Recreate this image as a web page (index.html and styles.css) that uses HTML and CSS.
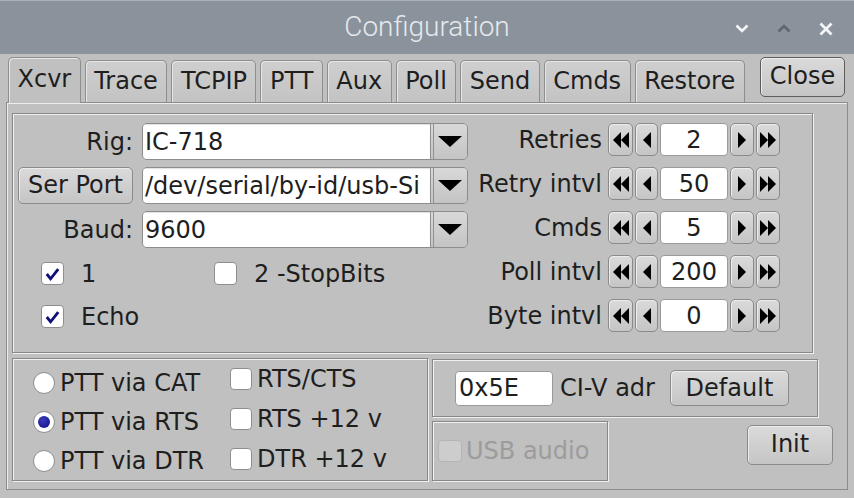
FILE: index.html
```html
<!DOCTYPE html>
<html>
<head>
<meta charset="utf-8">
<link rel="stylesheet" href="styles.css">
</head>
<body>
<div class="titlebar">
  <div></div>
  <div class="title">Configuration</div>
  <div class="wm">
    <svg class="wm-ico" width="14" height="9" viewBox="0 0 14 9"><polyline points="1.5,1.5 7,7 12.5,1.5" fill="none" stroke="#f4f5f6" stroke-width="2.6"/></svg>
    <svg class="wm-ico" width="14" height="9" viewBox="0 0 14 9"><polyline points="1.5,7.5 7,2 12.5,7.5" fill="none" stroke="#5e666e" stroke-width="2.6"/></svg>
    <svg class="wm-ico" width="14" height="14" viewBox="0 0 14 14"><path d="M1.5 1.5 L12.5 12.5 M12.5 1.5 L1.5 12.5" fill="none" stroke="#f4f5f6" stroke-width="2.8"/></svg>
  </div>
</div>

<div class="tabs">
  <div class="tab sel">Xcvr</div>
  <div class="tab">Trace</div>
  <div class="tab">TCPIP</div>
  <div class="tab">PTT</div>
  <div class="tab">Aux</div>
  <div class="tab">Poll</div>
  <div class="tab">Send</div>
  <div class="tab">Cmds</div>
  <div class="tab">Restore</div>
  <div class="btn close">Close</div>
</div>

<div class="panel">
  <div class="group upper">
    <div class="left">
      <div class="form">
        <div class="lbl">Rig:</div>
        <div class="choice"><div class="choice-val">IC-718</div><div class="choice-btn"><svg width="24" height="11" viewBox="0 0 24 11"><polygon points="0,0 24,0 12,11" fill="#000"/></svg></div></div>
        <div class="btn serport">Ser Port</div>
        <div class="choice"><div class="choice-val">/dev/serial/by-id/usb-Si</div><div class="choice-btn"><svg width="24" height="11" viewBox="0 0 24 11"><polygon points="0,0 24,0 12,11" fill="#000"/></svg></div></div>
        <div class="lbl">Baud:</div>
        <div class="choice"><div class="choice-val">9600</div><div class="choice-btn"><svg width="24" height="11" viewBox="0 0 24 11"><polygon points="0,0 24,0 12,11" fill="#000"/></svg></div></div>
      </div>
      <div class="checks">
        <div class="check-row">
          <div class="check-item first"><span class="cbox"><svg width="22" height="22" viewBox="0 0 22 22"><polyline points="5,11 9,16 17,6" fill="none" stroke="#10107a" stroke-width="3"/></svg></span><span>1</span></div>
          <div class="check-item"><span class="cbox"></span><span>2 -StopBits</span></div>
        </div>
        <div class="check-row">
          <div class="check-item first"><span class="cbox"><svg width="22" height="22" viewBox="0 0 22 22"><polyline points="5,11 9,16 17,6" fill="none" stroke="#10107a" stroke-width="3"/></svg></span><span>Echo</span></div>
        </div>
      </div>
    </div>
    <div class="counters">
      <div class="clbl">Retries</div>
      <div class="counter">
        <div class="btn cb w25"><svg width="16" height="16" viewBox="0 0 16 16"><polygon points="8,0 0,8 8,16" /><polygon points="16,0 8,8 16,16"/></svg></div>
        <div class="btn cb w23"><svg width="8" height="16" viewBox="0 0 8 16"><polygon points="8,0 0,8 8,16"/></svg></div>
        <div class="cval">2</div>
        <div class="btn cb w24"><svg width="8" height="16" viewBox="0 0 8 16"><polygon points="0,0 8,8 0,16"/></svg></div>
        <div class="btn cb w24"><svg width="16" height="16" viewBox="0 0 16 16"><polygon points="0,0 8,8 0,16"/><polygon points="8,0 16,8 8,16"/></svg></div>
      </div>
      <div class="clbl">Retry intvl</div>
      <div class="counter">
        <div class="btn cb w25"><svg width="16" height="16" viewBox="0 0 16 16"><polygon points="8,0 0,8 8,16" /><polygon points="16,0 8,8 16,16"/></svg></div>
        <div class="btn cb w23"><svg width="8" height="16" viewBox="0 0 8 16"><polygon points="8,0 0,8 8,16"/></svg></div>
        <div class="cval">50</div>
        <div class="btn cb w24"><svg width="8" height="16" viewBox="0 0 8 16"><polygon points="0,0 8,8 0,16"/></svg></div>
        <div class="btn cb w24"><svg width="16" height="16" viewBox="0 0 16 16"><polygon points="0,0 8,8 0,16"/><polygon points="8,0 16,8 8,16"/></svg></div>
      </div>
      <div class="clbl">Cmds</div>
      <div class="counter">
        <div class="btn cb w25"><svg width="16" height="16" viewBox="0 0 16 16"><polygon points="8,0 0,8 8,16" /><polygon points="16,0 8,8 16,16"/></svg></div>
        <div class="btn cb w23"><svg width="8" height="16" viewBox="0 0 8 16"><polygon points="8,0 0,8 8,16"/></svg></div>
        <div class="cval">5</div>
        <div class="btn cb w24"><svg width="8" height="16" viewBox="0 0 8 16"><polygon points="0,0 8,8 0,16"/></svg></div>
        <div class="btn cb w24"><svg width="16" height="16" viewBox="0 0 16 16"><polygon points="0,0 8,8 0,16"/><polygon points="8,0 16,8 8,16"/></svg></div>
      </div>
      <div class="clbl">Poll intvl</div>
      <div class="counter">
        <div class="btn cb w25"><svg width="16" height="16" viewBox="0 0 16 16"><polygon points="8,0 0,8 8,16" /><polygon points="16,0 8,8 16,16"/></svg></div>
        <div class="btn cb w23"><svg width="8" height="16" viewBox="0 0 8 16"><polygon points="8,0 0,8 8,16"/></svg></div>
        <div class="cval">200</div>
        <div class="btn cb w24"><svg width="8" height="16" viewBox="0 0 8 16"><polygon points="0,0 8,8 0,16"/></svg></div>
        <div class="btn cb w24"><svg width="16" height="16" viewBox="0 0 16 16"><polygon points="0,0 8,8 0,16"/><polygon points="8,0 16,8 8,16"/></svg></div>
      </div>
      <div class="clbl">Byte intvl</div>
      <div class="counter">
        <div class="btn cb w25"><svg width="16" height="16" viewBox="0 0 16 16"><polygon points="8,0 0,8 8,16" /><polygon points="16,0 8,8 16,16"/></svg></div>
        <div class="btn cb w23"><svg width="8" height="16" viewBox="0 0 8 16"><polygon points="8,0 0,8 8,16"/></svg></div>
        <div class="cval">0</div>
        <div class="btn cb w24"><svg width="8" height="16" viewBox="0 0 8 16"><polygon points="0,0 8,8 0,16"/></svg></div>
        <div class="btn cb w24"><svg width="16" height="16" viewBox="0 0 16 16"><polygon points="0,0 8,8 0,16"/><polygon points="8,0 16,8 8,16"/></svg></div>
      </div>
    </div>
  </div>

  <div class="lower">
    <div class="group ptt">
      <div class="radios">
        <div class="radio-item"><span class="rbox"></span><span>PTT via CAT</span></div>
        <div class="radio-item"><span class="rbox on"><span class="dot"></span></span><span>PTT via RTS</span></div>
        <div class="radio-item"><span class="rbox"></span><span>PTT via DTR</span></div>
      </div>
      <div class="pchecks">
        <div class="pcheck-item"><span class="cbox"></span><span>RTS/CTS</span></div>
        <div class="pcheck-item"><span class="cbox"></span><span>RTS +12 v</span></div>
        <div class="pcheck-item"><span class="cbox"></span><span>DTR +12 v</span></div>
      </div>
    </div>
    <div class="rightcol">
      <div class="group civ">
        <div class="civ-in">0x5E</div>
        <div class="civ-lbl">CI-V adr</div>
        <div class="btn default">Default</div>
      </div>
      <div class="row2">
        <div class="group usb">
          <span class="cbox dis"></span><span class="dis-txt">USB audio</span>
        </div>
        <div class="btn init">Init</div>
      </div>
    </div>
  </div>
</div>
</body>
</html>
```

FILE: styles.css
```css
* { box-sizing: border-box; }

body {
  margin: 0;
  width: 854px;
  height: 498px;
  overflow: hidden;
  background: #c0c0c0;
  font-family: "DejaVu Sans", sans-serif;
  font-size: 24px;
  color: #1e1e1e;
}

/* title bar */
.titlebar {
  height: 54px;
  background: #8a939c;
  border-top: 1px solid #a9b0b7;
  display: grid;
  grid-template-columns: 1fr auto 1fr;
  align-items: center;
}
.title {
  font-family: Roboto, "DejaVu Sans", sans-serif;
  font-weight: 300;
  font-size: 28px;
  color: #e6e9ec;
  padding-bottom: 2px;
}
.wm {
  justify-self: end;
  display: flex;
  align-items: center;
  gap: 28px;
  margin-right: 21px;
  padding-top: 2px;
}

/* tabs */
.tabs {
  height: 48px;
  display: flex;
  align-items: flex-end;
  gap: 4px;
  padding-left: 8px;
  padding-right: 9px;
}
.tab {
  height: 42px;
  padding: 0 8.5px;
  border: 1px solid #8e8e8e;
  border-bottom: none;
  border-radius: 5px 5px 0 0;
  background: linear-gradient(#cfcfcf, #c3c3c3);
  box-shadow: inset 1px 1px 0 #e6e6e6;
  display: flex;
  align-items: center;
  justify-content: center;
  padding-bottom: 2px;
}
.tab.sel {
  height: 46px;
  margin-bottom: -1px;
  background: #c0c0c0;
  z-index: 1;
  padding-bottom: 4px;
}
.btn {
  border: 1px solid #8a8a8a;
  border-radius: 5px;
  background: linear-gradient(#dadada, #c5c5c5);
  box-shadow: inset 1px 1px 0 #ececec;
  display: flex;
  align-items: center;
  justify-content: center;
}
.close {
  margin-left: auto;
  width: 85px;
  height: 40px;
  margin-bottom: 5px;
  border-color: #5c5c5c;
  padding-bottom: 2px;
}

/* panel */
.panel {
  margin-left: 6px;
  width: 842px;
  height: 388px;
  border: 1px solid #8c8c8c;
  box-shadow: inset 1px 1px 0 #ececec;
  padding: 10px 0 0 5px;
}
.group {
  border: 1px solid #888;
  box-shadow: inset 1px 1px 0 #f0f0f0, 1px 1px 0 #f0f0f0;
}
.upper {
  width: 801px;
  height: 240px;
  display: flex;
}
.left {
  width: 456px;
  padding: 9px 0 0 5px;
}
.form {
  display: grid;
  grid-template-columns: 115px 326px;
  grid-auto-rows: 37px;
  column-gap: 9px;
  row-gap: 7px;
}
.lbl {
  display: flex;
  align-items: center;
  justify-content: flex-end;
}
.serport { padding-bottom: 1px; }
.choice {
  display: flex;
  border: 1px solid #8c8c8c;
  border-radius: 5px;
  overflow: hidden;
}
.choice-val {
  flex: 1;
  background: #fff;
  display: flex;
  align-items: center;
  padding-left: 2px;
  white-space: nowrap;
  overflow: hidden;
  box-shadow: inset 0 1px 1px rgba(0,0,0,0.12);
}
.choice-btn {
  width: 37px;
  border-left: 4px double #8f8f8f;
  background: linear-gradient(#d8d8d8, #c4c4c4);
  display: flex;
  align-items: center;
  justify-content: center;
  padding-right: 2px;
}

.checks {
  margin-top: 14px;
  margin-left: 23px;
  display: flex;
  flex-direction: column;
  gap: 20px;
}
.check-row {
  display: flex;
  height: 23px;
}
.check-item {
  display: flex;
  align-items: center;
  gap: 17px;
}
.check-item.first { width: 173px; }
.cbox {
  width: 23px;
  height: 23px;
  flex: none;
  background: #fff;
  border: 1px solid #8e8e8e;
  border-radius: 4px;
  display: flex;
  align-items: center;
  justify-content: center;
}

.counters {
  margin-left: auto;
  margin-right: 32px;
  padding-top: 9px;
  display: grid;
  grid-template-columns: auto auto;
  grid-auto-rows: 33px;
  column-gap: 6px;
  row-gap: 11px;
  align-content: start;
}
.clbl {
  display: flex;
  align-items: center;
  justify-content: flex-end;
}
.counter {
  display: flex;
  gap: 2px;
}
.cb svg { fill: #000; }
.w25 { width: 25px; }
.w23 { width: 23px; }
.w24 { width: 24px; }
.cval {
  width: 68px;
  background: #fff;
  border: 1px solid #9a9a9a;
  border-radius: 4px;
  display: flex;
  align-items: center;
  justify-content: center;
}

/* lower */
.lower {
  margin-top: 5px;
  display: flex;
  gap: 4px;
}
.ptt {
  width: 416px;
  height: 123px;
  display: flex;
  padding-left: 20px;
}
.radios {
  width: 197px;
  padding-top: 4px;
  display: flex;
  flex-direction: column;
}
.radio-item {
  height: 40px;
  display: flex;
  align-items: center;
  gap: 5px;
  white-space: nowrap;
}
.rbox {
  width: 22px;
  height: 22px;
  flex: none;
  border-radius: 50%;
  background: #fff;
  border: 1px solid #8e8e8e;
  display: flex;
  align-items: center;
  justify-content: center;
}
.dot {
  width: 12px;
  height: 12px;
  border-radius: 50%;
  background: radial-gradient(circle at 40% 35%, #3a3ab8, #12128a);
}
.pchecks {
  display: flex;
  flex-direction: column;
}
.pcheck-item {
  height: 40px;
  display: flex;
  align-items: center;
  gap: 5px;
  white-space: nowrap;
}
.pcheck-item .cbox { width: 22px; height: 22px; }

.rightcol {
  width: 401px;
  display: flex;
  flex-direction: column;
}
.civ {
  margin-top: 1px;
  width: 386px;
  height: 58px;
  display: flex;
  align-items: center;
  padding-left: 22px;
}
.civ-in {
  width: 98px;
  height: 35px;
  background: #fff;
  border: 1px solid #9a9a9a;
  border-radius: 4px;
  display: flex;
  align-items: center;
  padding-left: 3px;
}
.civ-lbl { margin-left: 7px; }
.default {
  margin-left: 15px;
  width: 119px;
  height: 36px;
  padding-bottom: 1px;
}
.row2 {
  margin-top: 4px;
  display: flex;
}
.usb {
  width: 176px;
  height: 60px;
  display: flex;
  align-items: center;
  padding-left: 5px;
  gap: 4px;
}
.cbox.dis {
  width: 24px;
  height: 22px;
  background: #cdcdcd;
  border-color: #b4b4b4;
}
.dis-txt { color: #9c9c9c; }
.init {
  margin-left: auto;
  margin-top: 4px;
  width: 86px;
  height: 40px;
  padding-bottom: 3px;
}
```
